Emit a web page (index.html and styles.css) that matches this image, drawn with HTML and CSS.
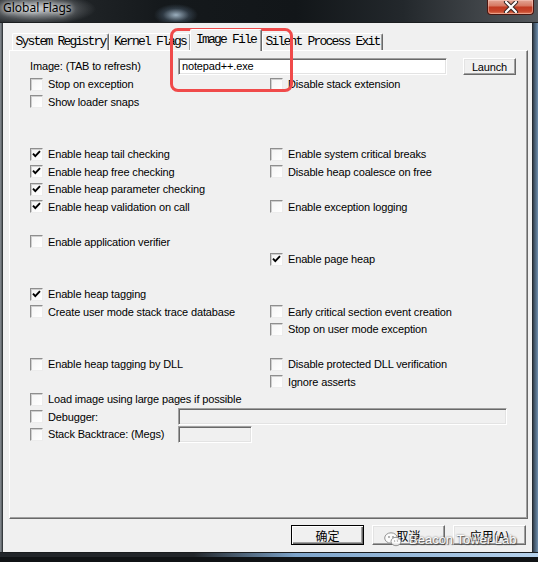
FILE: index.html
```html
<!DOCTYPE html>
<html lang="en">
<head>
<meta charset="utf-8">
<title>Global Flags</title>
<link rel="stylesheet" href="styles.css">
</head>
<body>
<div class="window">
  <div class="titlebar">
    <span class="title">Global Flags</span>
    <div class="close">
      <svg width="16" height="12" viewBox="0 0 16 12"><path d="M3 1 L13 11 M13 1 L3 11" stroke="#3a2a28" stroke-width="4.2" stroke-linecap="round"/><path d="M3 1 L13 11 M13 1 L3 11" stroke="#fff" stroke-width="2.2" stroke-linecap="round"/></svg>
    </div>
  </div>
  <div class="frame-l"></div>
  <div class="client">
    <div class="tabs">
      <div class="tab t1">System Registry</div>
      <div class="tab t2">Kernel Flags</div>
      <div class="tab t3 active">Image File</div>
      <div class="tab t4">Silent Process Exit</div>
    </div>
    <div class="panel">
      <div class="image-row">
        <span class="image-label">Image: (TAB to refresh)</span>
        <div class="field image-field">notepad++.exe</div>
        <div class="btn launch">Launch</div>
      </div>
      <div class="rows">
        <div class="row">
          <div class="cell"><span class="cb"></span><span>Stop on exception</span></div>
          <div class="cell"><span class="cb"></span><span>Disable stack extension</span></div>
        </div>
        <div class="row">
          <div class="cell"><span class="cb"></span><span>Show loader snaps</span></div>
        </div>
        <div class="row"></div>
        <div class="row"></div>
        <div class="row">
          <div class="cell"><span class="cb"><svg width="11" height="11" viewBox="0 0 11 11"><path d="M2 4.6 L4.3 7.2 L9 2.2" fill="none" stroke="#000" stroke-width="1.9"/></svg></span><span>Enable heap tail checking</span></div>
          <div class="cell"><span class="cb"></span><span>Enable system critical breaks</span></div>
        </div>
        <div class="row">
          <div class="cell"><span class="cb"><svg width="11" height="11" viewBox="0 0 11 11"><path d="M2 4.6 L4.3 7.2 L9 2.2" fill="none" stroke="#000" stroke-width="1.9"/></svg></span><span>Enable heap free checking</span></div>
          <div class="cell"><span class="cb"></span><span>Disable heap coalesce on free</span></div>
        </div>
        <div class="row">
          <div class="cell"><span class="cb"><svg width="11" height="11" viewBox="0 0 11 11"><path d="M2 4.6 L4.3 7.2 L9 2.2" fill="none" stroke="#000" stroke-width="1.9"/></svg></span><span>Enable heap parameter checking</span></div>
        </div>
        <div class="row">
          <div class="cell"><span class="cb"><svg width="11" height="11" viewBox="0 0 11 11"><path d="M2 4.6 L4.3 7.2 L9 2.2" fill="none" stroke="#000" stroke-width="1.9"/></svg></span><span>Enable heap validation on call</span></div>
          <div class="cell"><span class="cb"></span><span>Enable exception logging</span></div>
        </div>
        <div class="row"></div>
        <div class="row">
          <div class="cell"><span class="cb"></span><span>Enable application verifier</span></div>
        </div>
        <div class="row">
          <div class="cell"></div>
          <div class="cell"><span class="cb"><svg width="11" height="11" viewBox="0 0 11 11"><path d="M2 4.6 L4.3 7.2 L9 2.2" fill="none" stroke="#000" stroke-width="1.9"/></svg></span><span>Enable page heap</span></div>
        </div>
        <div class="row"></div>
        <div class="row">
          <div class="cell"><span class="cb"><svg width="11" height="11" viewBox="0 0 11 11"><path d="M2 4.6 L4.3 7.2 L9 2.2" fill="none" stroke="#000" stroke-width="1.9"/></svg></span><span>Enable heap tagging</span></div>
        </div>
        <div class="row">
          <div class="cell"><span class="cb"></span><span>Create user mode stack trace database</span></div>
          <div class="cell"><span class="cb"></span><span>Early critical section event creation</span></div>
        </div>
        <div class="row">
          <div class="cell"></div>
          <div class="cell"><span class="cb"></span><span>Stop on user mode exception</span></div>
        </div>
        <div class="row"></div>
        <div class="row">
          <div class="cell"><span class="cb"></span><span>Enable heap tagging by DLL</span></div>
          <div class="cell"><span class="cb"></span><span>Disable protected DLL verification</span></div>
        </div>
        <div class="row">
          <div class="cell"></div>
          <div class="cell"><span class="cb"></span><span>Ignore asserts</span></div>
        </div>
        <div class="row">
          <div class="cell long"><span class="cb"></span><span>Load image using large pages if possible</span></div>
        </div>
        <div class="row">
          <div class="cell lead"><span class="cb"></span><span>Debugger:</span></div>
          <div class="field disabled debugger-field"></div>
        </div>
        <div class="row">
          <div class="cell lead"><span class="cb"></span><span>Stack Backtrace: (Megs)</span></div>
          <div class="field disabled megs-field"></div>
        </div>
      </div>
    </div>
    <div class="buttons">
      <div class="btn dlg default">确定</div>
      <div class="btn dlg">取消</div>
      <div class="btn dlg">应用(A)</div>
    </div>
  </div>
  <div class="frame-r"></div>
  <div class="frame-b"></div>
</div>

<div class="callout"></div>

<div class="watermark">
  <svg width="18" height="15" viewBox="0 0 18 15">
    <ellipse cx="7" cy="6" rx="6.3" ry="5.2" fill="rgba(255,255,255,0.85)" stroke="#8a8a8a" stroke-width="1"/>
    <ellipse cx="12" cy="9.5" rx="5" ry="4.2" fill="rgba(255,255,255,0.9)" stroke="#8a8a8a" stroke-width="1"/>
    <circle cx="5" cy="5" r="0.9" fill="#888"/>
    <circle cx="9" cy="5" r="0.9" fill="#888"/>
    <circle cx="10.5" cy="9" r="0.7" fill="#999"/>
    <circle cx="13.5" cy="9" r="0.7" fill="#999"/>
  </svg>
  <span>Beacon Tower Lab</span>
</div>
</body>
</html>
```

FILE: styles.css
```css
* {
  box-sizing: border-box;
}

html,
body {
  margin: 0;
  padding: 0;
}

body {
  width: 538px;
  height: 562px;
  overflow: hidden;
  position: relative;
  background: #121517;
  font-family: "Liberation Sans", Arial, sans-serif;
  font-size: 11px;
  letter-spacing: -0.15px;
  color: #000;
}

/* window chrome */
.window {
  width: 538px;
  height: 562px;
  display: grid;
  grid-template-columns: 3px 529px 6px;
  grid-template-rows: 23px 529px 10px;
}

.titlebar {
  grid-column: 1 / 4;
  display: flex;
  align-items: flex-start;
  background:
    radial-gradient(ellipse 22px 11px at 176px 15px, rgba(200, 225, 245, 0.75), rgba(120, 150, 180, 0.25) 60%, transparent 100%),
    radial-gradient(ellipse 60px 16px at 36px 9px, rgba(210, 214, 218, 0.9), rgba(120, 124, 128, 0.4) 70%, transparent 100%),
    linear-gradient(90deg, #2a2e31 0, #15191c 30%, #121619 55%, #23282c 75%, #55595d 100%);
  border-bottom: 1px solid #1b1e20;
}

.title {
  font-family: "Noto Sans", "Liberation Sans", sans-serif;
  font-size: 12px;
  letter-spacing: 0;
  line-height: 16px;
  padding: 0 0 0 3px;
  color: #000;
  text-shadow: 0 0 4px rgba(255, 255, 255, 0.9), 0 0 8px rgba(255, 255, 255, 0.7);
}

.close {
  margin-left: auto;
  margin-right: 4px;
  width: 47px;
  height: 15px;
  border: 1px solid #4c1710;
  border-top: none;
  border-radius: 0 0 4px 4px;
  background: linear-gradient(180deg, #e3a695 0, #d77a64 40%, #c23b22 52%, #c7452b 80%, #de7d5c 100%);
  box-shadow: inset 0 0 0 1px rgba(255, 210, 200, 0.45);
  display: flex;
  justify-content: center;
  align-items: center;
}

.frame-l {
  background: linear-gradient(90deg, #8a9096 0, #5b6166 60%, #1d2022 100%);
}

.frame-r {
  background: linear-gradient(90deg, #1d2022 0, #3c4d5d 30%, #6f8fae 100%);
}

.frame-b {
  grid-column: 1 / 4;
  background:
    linear-gradient(180deg, #1a1d1f 0, #1a1d1f 1px, transparent 1px, transparent 5px, #101315 5px),
    linear-gradient(90deg, #22262a 0, #22262a 36%, #7da4ca 55%, #b6d2ec 100%);
}

/* client area */
.client {
  background: #f0f0f0;
  padding: 6px 4px 0 6px;
  display: flex;
  flex-direction: column;
}

/* tab strip */
.tabs {
  height: 21px;
  display: flex;
  align-items: flex-end;
  padding-left: 3px;
}

.tab {
  height: 17px;
  padding-top: 1px;
  text-align: center;
  font-family: "Liberation Mono", "Courier New", monospace;
  font-size: 13px;
  letter-spacing: -1.8px;
  line-height: 14px;
  white-space: nowrap;
  background: #f0f0f0;
  border-top: 1px solid #fff;
  border-left: 1px solid #fff;
  border-right: 1px solid #696969;
  border-radius: 2px 2px 0 0;
  box-shadow: inset -1px 0 #a0a0a0;
}

.t1 { width: 97px; }
.t2 { width: 82px; }
.t3 { width: 72px; }
.t4 { width: 121px; }

.tab.active {
  height: 22px;
  padding-top: 3px;
  margin: 0 0 -1px -1px;
  position: relative;
  z-index: 1;
}

/* page */
.panel {
  height: 469px;
  flex: none;
  background: #f0f0f0;
  border-top: 1px solid #fff;
  border-left: 1px solid #fff;
  border-right: 1px solid #696969;
  border-bottom: 1px solid #696969;
  box-shadow: inset -1px -1px #a0a0a0;
  padding: 6px 0 0 20px;
}

.image-row {
  height: 18px;
  display: flex;
  align-items: center;
}

.image-label {
  width: 148px;
  flex: none;
}

.field {
  height: 17px;
  background: #fff;
  border: 1px solid;
  border-color: #a0a0a0 #fff #fff #a0a0a0;
  box-shadow: inset 1px 1px #696969, inset -1px -1px #e3e3e3;
  padding: 1px 0 0 3px;
  line-height: 13px;
  flex: none;
}

.image-field {
  width: 269px;
}

.field.disabled {
  background: #f0f0f0;
}

.debugger-field {
  width: 329px;
}

.megs-field {
  width: 74px;
}

.btn {
  display: flex;
  justify-content: center;
  align-items: center;
  background: #f0f0f0;
  border: 1px solid;
  border-color: #fff #696969 #696969 #fff;
  box-shadow: inset -1px -1px #a0a0a0, inset 1px 1px #e3e3e3;
  flex: none;
}

.launch {
  width: 53px;
  height: 17px;
  margin-left: 16px;
  padding-top: 1px;
}

/* checkbox grid */
.rows {
  padding-top: 0.5px;
}

.row {
  height: 17.5px;
  display: flex;
  align-items: center;
}

.cell {
  width: 240px;
  flex: none;
  display: flex;
  align-items: center;
  white-space: nowrap;
  line-height: 13px;
}

.cell span:last-child {
  padding-top: 1px;
}

.cell.long {
  width: 300px;
}

.cell.lead {
  width: 148px;
}

.cb {
  width: 13px;
  height: 13px;
  margin-right: 5px;
  flex: none;
  background: linear-gradient(135deg, #f4f4f4, #fff);
  border: 1px solid;
  border-color: #8e8e8e #ececec #ececec #8e8e8e;
  box-shadow: inset 1px 1px #cfcfcf;
  display: flex;
}

/* dialog buttons */
.buttons {
  margin-top: 6px;
  padding-right: 2px;
  display: flex;
  justify-content: flex-end;
  gap: 8px;
}

.dlg {
  width: 73px;
  height: 20px;
  font-family: "Noto Sans CJK SC", "Liberation Sans", sans-serif;
  font-size: 12px;
  letter-spacing: 0;
}

.dlg.default {
  border-color: #000;
  box-shadow: inset 1px 1px #fff, inset -1px -1px #696969, inset -2px -2px #a0a0a0;
}

/* annotation drawn over the tab and image field */
.callout {
  position: absolute;
  left: 170px;
  top: 28px;
  width: 123px;
  height: 64px;
  border: 3px solid #f04a4a;
  border-radius: 8px;
}

/* channel mark in the lower right corner */
.watermark {
  position: absolute;
  left: 384px;
  top: 532px;
  display: flex;
  align-items: center;
  gap: 7px;
  opacity: 0.9;
}

.watermark span {
  font-family: "Liberation Sans", Arial, sans-serif;
  font-size: 13px;
  letter-spacing: 0;
  color: #fff;
  text-shadow: 0 0 2px #555, 1px 1px 1px #444;
}
```
